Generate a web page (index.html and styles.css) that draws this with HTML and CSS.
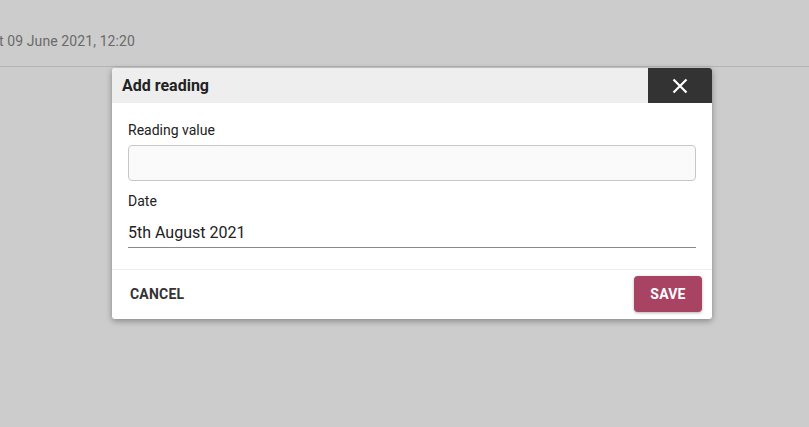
FILE: index.html
```html
<!DOCTYPE html>
<html>
<head>
<meta charset="utf-8">
<link rel="stylesheet" href="styles.css">
</head>
<body>
<div class="topbar"><span class="updated">t 09 June 2021, 12:20</span></div>
<div class="dialog">
  <div class="dialog-header">
    <h2 class="dialog-title">Add reading</h2>
    <button class="close-btn" aria-label="Close">
      <svg width="16" height="16" viewBox="0 0 16 16"><path d="M1.5 1.5 L14.5 14.5 M14.5 1.5 L1.5 14.5" stroke="#fff" stroke-width="2.2" fill="none"/></svg>
    </button>
  </div>
  <div class="dialog-body">
    <label class="field-label">Reading value</label>
    <input class="text-input" type="text">
    <label class="field-label date-label">Date</label>
    <div class="date-field">5th August 2021</div>
  </div>
  <div class="dialog-footer">
    <button class="btn-cancel">CANCEL</button>
    <button class="btn-save">SAVE</button>
  </div>
</div>
</body>
</html>
```
FILE: styles.css
```css
html, body {
  margin: 0;
  padding: 0;
}
body {
  background: #cccccc;
  font-family: Roboto, "Liberation Sans", sans-serif;
  width: 809px;
  height: 427px;
  overflow: hidden;
}
.topbar {
  height: 67px;
  box-sizing: border-box;
  border-bottom: 1px solid #b4b4b4;
  display: flex;
  align-items: flex-start;
  padding-top: 33px;
}
.updated {
  font-size: 14px;
  line-height: 17px;
  color: #6a6a6a;
  margin-left: -1px;
  letter-spacing: 0.1px;
}
.dialog {
  position: absolute;
  left: 112px;
  top: 68px;
  width: 600px;
  background: #fff;
  border-radius: 3px;
  box-shadow: 0 2px 6px rgba(0,0,0,0.35);
  overflow: hidden;
}
.dialog-header {
  display: flex;
  height: 35px;
  background: #eeeeee;
  align-items: stretch;
}
.dialog-title {
  flex: 1;
  margin: 0;
  padding-left: 10px;
  font-size: 16px;
  font-weight: 700;
  color: #222;
  display: flex;
  align-items: center;
}
.close-btn {
  width: 64px;
  border: none;
  background: #333333;
  display: flex;
  align-items: center;
  justify-content: center;
  padding: 0;
  margin: 0;
}
.dialog-body {
  padding: 17px 16px 21px 16px;
  display: flex;
  flex-direction: column;
}
.field-label {
  font-size: 14px;
  color: #222;
  line-height: 20px;
}
.text-input {
  margin-top: 5px;
  height: 36px;
  box-sizing: border-box;
  border: 1px solid #c8c8c8;
  border-radius: 4px;
  background: #fafafa;
  font-family: inherit;
  font-size: 16px;
  padding: 0 10px;
  outline: none;
}
.date-label {
  margin-top: 10px;
}
.date-field {
  height: 32px;
  box-sizing: border-box;
  margin-top: 5px;
  padding-top: 1px;
  border-bottom: 1px solid #8a8a8a;
  font-size: 16px;
  color: #222;
  display: flex;
  align-items: center;
}
.dialog-footer {
  border-top: 1px solid #eeeeee;
  display: flex;
  justify-content: space-between;
  align-items: center;
  padding: 6px 10px 7px 10px;
}
.btn-cancel {
  background: none;
  border: none;
  font-family: inherit;
  font-size: 14px;
  font-weight: 700;
  color: #333;
  padding: 0 8px;
  height: 36px;
  letter-spacing: 0.2px;
}
.btn-save {
  background: #a84364;
  color: #fff;
  border: none;
  border-radius: 4px;
  font-family: inherit;
  font-size: 14px;
  font-weight: 700;
  height: 36px;
  width: 68px;
  box-shadow: 0 1px 3px rgba(0,0,0,0.3);
  letter-spacing: 0.2px;
}
```
